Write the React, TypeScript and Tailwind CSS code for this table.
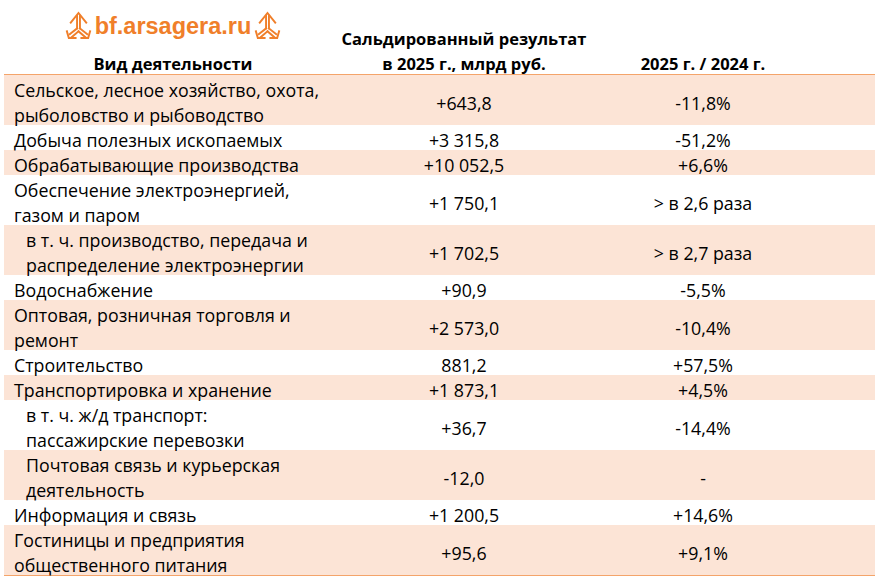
import React from "react";

type Row = {
  name: string[];
  value: string;
  change: string;
  indent?: boolean;
};

const rows: Row[] = [
  { name: ["Сельское, лесное хозяйство, охота,", "рыболовство и рыбоводство"], value: "+643,8", change: "-11,8%" },
  { name: ["Добыча полезных ископаемых"], value: "+3 315,8", change: "-51,2%" },
  { name: ["Обрабатывающие производства"], value: "+10 052,5", change: "+6,6%" },
  { name: ["Обеспечение электроэнергией,", "газом и паром"], value: "+1 750,1", change: "> в 2,6 раза" },
  { name: ["в т. ч. производство, передача и", "распределение электроэнергии"], value: "+1 702,5", change: "> в 2,7 раза", indent: true },
  { name: ["Водоснабжение"], value: "+90,9", change: "-5,5%" },
  { name: ["Оптовая, розничная торговля и", "ремонт"], value: "+2 573,0", change: "-10,4%" },
  { name: ["Строительство"], value: "881,2", change: "+57,5%" },
  { name: ["Транспортировка и хранение"], value: "+1 873,1", change: "+4,5%" },
  { name: ["в т. ч. ж/д транспорт:", "пассажирские перевозки"], value: "+36,7", change: "-14,4%", indent: true },
  { name: ["Почтовая связь и курьерская", "деятельность"], value: "-12,0", change: "-", indent: true },
  { name: ["Информация и связь"], value: "+1 200,5", change: "+14,6%" },
  { name: ["Гостиницы и предприятия", "общественного питания"], value: "+95,6", change: "+9,1%" },
];

function LogoMark() {
  return (
    <svg width="27" height="29" viewBox="0 0 26 30" fill="none" stroke="#F07F2A" strokeWidth="2" strokeLinecap="square">
      <polyline points="5,12 13,2 21,12" />
      <line x1="11.5" y1="5" x2="11.5" y2="18" />
      <line x1="14.5" y1="5" x2="14.5" y2="18" />
      <line x1="11.5" y1="18" x2="4" y2="24" />
      <line x1="14.5" y1="18" x2="22" y2="24" />
      <line x1="13" y1="21" x2="6" y2="27" />
      <line x1="13" y1="21" x2="20" y2="27" />
      <polyline points="1,21 3,28 10,28" />
      <polyline points="25,21 23,28 16,28" />
    </svg>
  );
}

// one text line of the sheet: 25px tall, glyphs sit a bit low like in Excel
function Line({ children }: { children: React.ReactNode }) {
  return <div className="h-[25px] leading-[30px] whitespace-nowrap">{children}</div>;
}

export default function App() {
  return (
    <div className="w-[880px] h-[587px] bg-white text-black font-['Open_Sans',sans-serif] text-[17.8px]">
      <div className="ml-[4px] w-[871px]">
        {/* header */}
        <div className="grid grid-cols-[338px_244px_234px_1fr] h-[75px] font-bold text-[16.5px] border-b border-[#F4A46A]">
          <div className="flex flex-col items-center">
            <div className="flex items-center gap-[3px] mt-[11px]">
              <LogoMark />
              <span className="font-['Liberation_Sans',sans-serif] font-bold text-[23.5px] leading-[28px] text-[#F07F2A]">
                bf.arsagera.ru
              </span>
              <LogoMark />
            </div>
            <div className="mt-auto">
              <Line>Вид деятельности</Line>
            </div>
          </div>
          <div className="flex flex-col justify-end items-center">
            <Line>Сальдированный результат</Line>
            <Line>в 2025 г., млрд руб.</Line>
          </div>
          <div className="flex flex-col justify-end items-center">
            <Line>2025 г. / 2024 г.</Line>
          </div>
          <div />
        </div>
        {/* body */}
        <div className="border-b border-[#F4A46A]">
          {rows.map((r, i) => (
            <div
              key={i}
              className={`grid grid-cols-[338px_244px_234px_1fr] ${i % 2 === 0 ? "bg-[#FCE4D6]" : "bg-white"}`}
            >
              <div className={r.indent ? "pl-[22px]" : "pl-[10px]"}>
                {r.name.map((l, j) => (
                  <Line key={j}>{l}</Line>
                ))}
              </div>
              <div className="flex items-center justify-center">
                <Line>{r.value}</Line>
              </div>
              <div className="flex items-center justify-center">
                <Line>{r.change}</Line>
              </div>
              <div />
            </div>
          ))}
        </div>
      </div>
    </div>
  );
}
